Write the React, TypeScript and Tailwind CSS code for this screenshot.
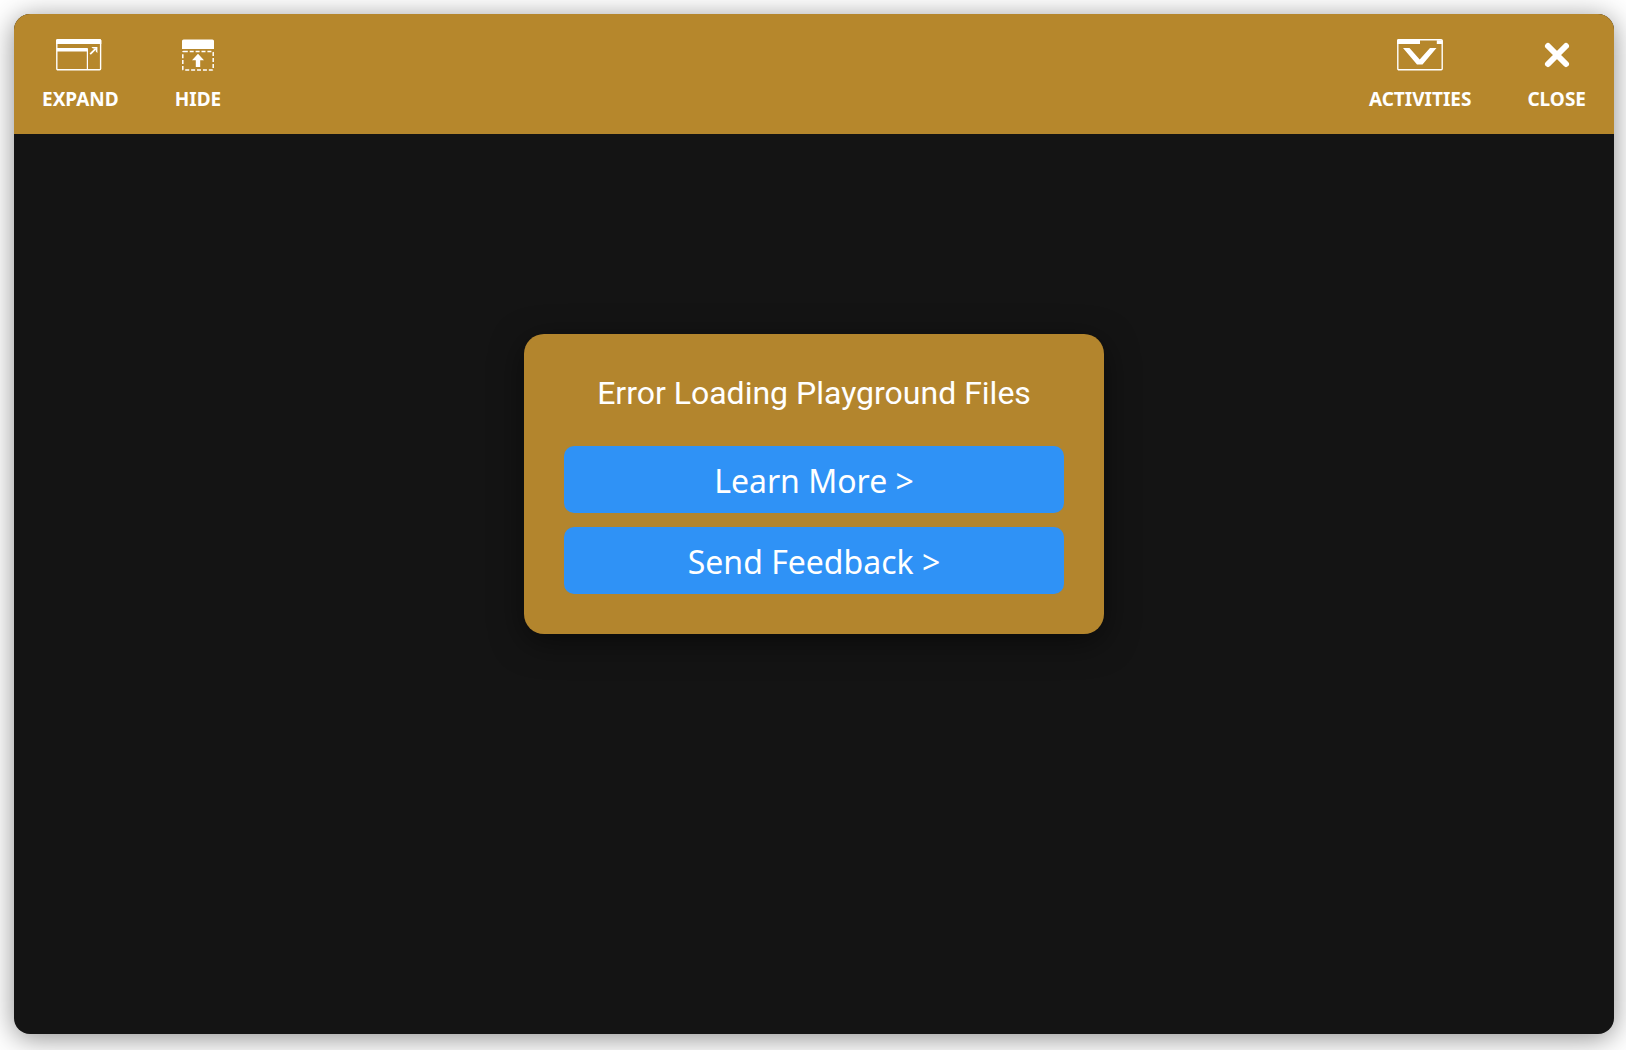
import React from 'react';

function ExpandIcon() {
  return (
    <svg className="h-8 w-12" viewBox="0 0 48 32" fill="none">
      <rect x="0.8" y="0.8" width="43.8" height="30" rx="1" stroke="#fff" strokeWidth="1.4" />
      <path d="M0 1.5Q0 0 1.5 0H43.8Q45.3 0 45.3 1.5V5H0Z" fill="#fff" />
      <path d="M1 9H31.8V12.6H1Z" fill="#fff" />
      <path d="M31.4 10V30" stroke="#fff" strokeWidth="1.2" />
      <path d="M34.2 15.2L39.8 9.6" stroke="#fff" strokeWidth="1.8" />
      <path d="M35.4 8H41.4V14L39.8 12.4V9.6H37Z" fill="#fff" />
    </svg>
  );
}

function HideIcon() {
  return (
    <svg className="h-8 w-8" viewBox="0 0 32 32" fill="none">
      <path d="M0 2Q0 0.4 1.6 0.4H30.4Q32 0.4 32 2V10H0Z" fill="#fff" />
      <rect x="0.8" y="12.4" width="30.4" height="18.6" rx="1" stroke="#fff" strokeWidth="1.5" strokeDasharray="4 1.9" />
      <path d="M16 14.8L22 21.2H18.2V28H13.8V21.2H10Z" fill="#fff" />
    </svg>
  );
}

function ActivitiesIcon() {
  return (
    <svg className="h-8 w-[46px]" viewBox="0 0 46 32" fill="none">
      <rect x="0.8" y="0.8" width="44.4" height="30" rx="1" stroke="#fff" strokeWidth="1.4" />
      <path d="M0 1.5Q0 0 1.5 0H23V5H0Z" fill="#fff" />
      <path d="M39.8 1.2H45.6V5H39.8Z" fill="#fff" />
      <path d="M6 9H12.5L22.7 20.5L33 9H39.5L25.5 25.6H20Z" fill="#fff" />
    </svg>
  );
}

function CloseIcon() {
  return (
    <svg className="h-8 w-8" viewBox="0 0 32 32" fill="none">
      <path d="M7 7L25 25M25 7L7 25" stroke="#fff" strokeWidth="6" strokeLinecap="round" />
    </svg>
  );
}

interface ToolbarButtonProps {
  label: string;
  icon: React.ReactNode;
}

function ToolbarButton({ label, icon }: ToolbarButtonProps) {
  return (
    <button
      type="button"
      className="flex cursor-pointer flex-col items-center gap-3 px-7 pt-[25px] text-[19px] leading-8 font-bold text-white"
    >
      {icon}
      {label}
    </button>
  );
}

function ErrorDialog() {
  return (
    <div
      role="alertdialog"
      aria-labelledby="error-title"
      className="flex w-full max-w-[580px] flex-col gap-[14px] rounded-[20px] bg-[#b3852d] p-10 text-white shadow-[0_8px_32px_rgba(0,0,0,0.5)]"
    >
      <h1 id="error-title" className="mb-5 text-center font-[Roboto,sans-serif] text-[32px] leading-[38px]">
        Error Loading Playground Files
      </h1>
      <a href="#learn-more" className="rounded-[10px] bg-[#2f92f6] pt-[13px] pb-[11px] text-center text-[32px] leading-[43px]">
        Learn More &gt;
      </a>
      <a href="#feedback" className="rounded-[10px] bg-[#2f92f6] pt-[13px] pb-[11px] text-center text-[32px] leading-[43px]">
        Send Feedback &gt;
      </a>
    </div>
  );
}

function App() {
  return (
    <div className="flex h-screen bg-white pt-[14px] pr-3 pb-4 pl-[14px] font-['Noto_Sans',sans-serif]">
      <div className="flex flex-1 flex-col overflow-hidden rounded-2xl bg-[#141414] shadow-[0_4px_28px_rgba(0,0,0,0.45)]">
        <header className="flex h-[120px] shrink-0 items-start justify-between bg-[#b6872c]">
          <div className="flex">
            <ToolbarButton label="EXPAND" icon={<ExpandIcon />} />
            <ToolbarButton label="HIDE" icon={<HideIcon />} />
          </div>
          <div className="flex">
            <ToolbarButton label="ACTIVITIES" icon={<ActivitiesIcon />} />
            <ToolbarButton label="CLOSE" icon={<CloseIcon />} />
          </div>
        </header>
        <main className="flex flex-1 items-start justify-center px-6 pt-[200px]">
          <ErrorDialog />
        </main>
      </div>
    </div>
  );
}

export default App;
